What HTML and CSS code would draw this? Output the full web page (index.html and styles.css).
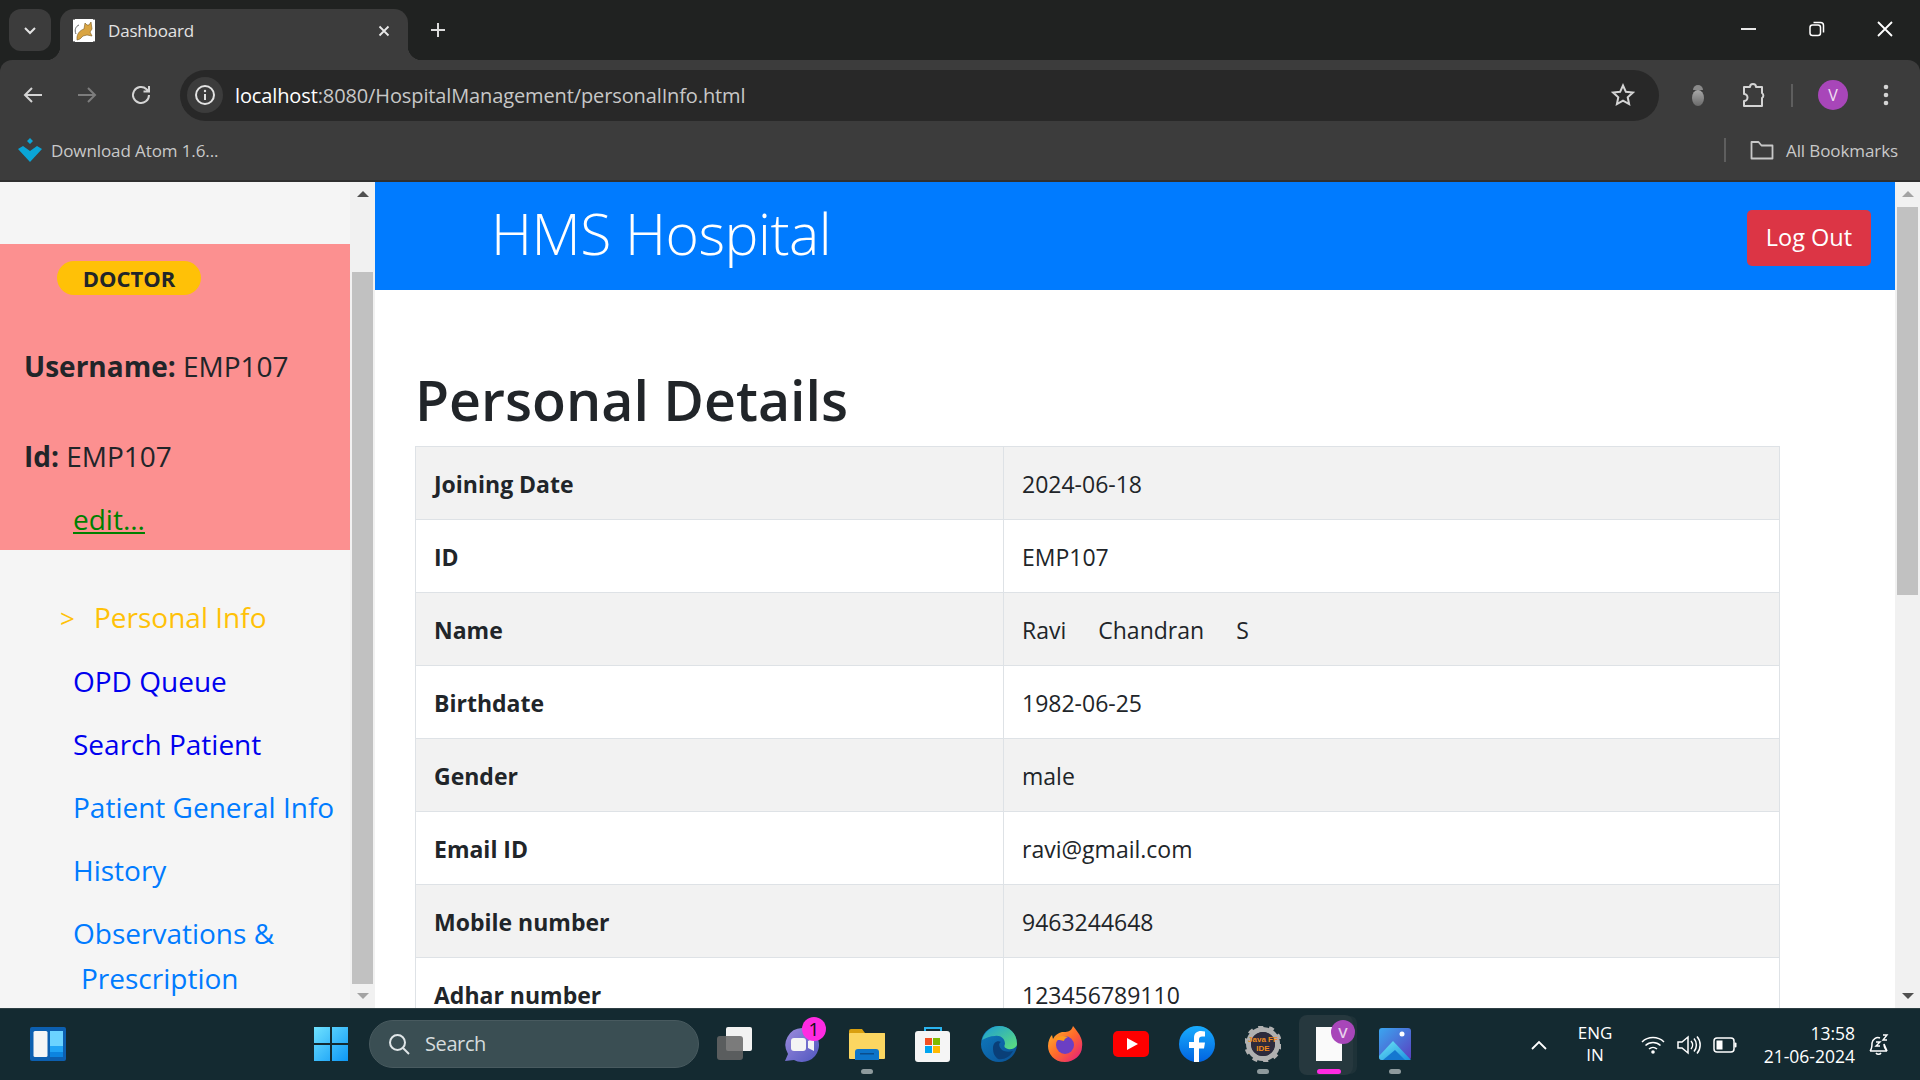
FILE: index.html
```html
<!DOCTYPE html>
<html lang="en">
    <head>
        <meta charset="UTF-8">
        <title>Dashboard</title>
        <link rel="stylesheet" href="styles.css">
    </head>
    <body>
        <!-- browser chrome -->
        <header class="tabstrip">
            <div class="tab-search">
                <svg width="16" height="16" viewBox="0 0 16 16"><path d="M3 6l5 5 5-5" fill="none" stroke="#e3e3e3" stroke-width="2"/></svg>
            </div>
            <div class="tab">
                <svg class="favicon" width="22" height="23" viewBox="0 0 22 23">
                    <rect width="22" height="23" fill="#fff"/>
                    <path d="M0 0h2M20 0h2M0 23h2M20 23h2" stroke="#111" stroke-width="1"/>
                    <path d="M4 18c1-5 4-7 7-8l1-6 2 2h2l2-3 1 7-2 3 2 4-5-1-4 1-3 3-3 1z" fill="#d9a441" stroke="#7a5a20" stroke-width=".6"/>
                    <path d="M3 15C1 11 3 7 6 6" fill="none" stroke="#666" stroke-width="1"/>
                </svg>
                <span class="tab-title">Dashboard</span>
                <svg class="tab-close" width="14" height="14" viewBox="0 0 14 14"><path d="M2.500 2.500l9 9M11.500 2.500l-9 9" stroke="#e8e8e8" stroke-width="1.800"/></svg>
            </div>
            <svg class="new-tab" width="18" height="18" viewBox="0 0 18 18"><path d="M9 2v14M2 9h14" stroke="#dcdcdc" stroke-width="2"/></svg>
            <div class="window-buttons">
                <svg width="16" height="16" viewBox="0 0 16 16"><path d="M0 8h15" stroke="#fff" stroke-width="1.800"/></svg>
                <svg width="16" height="16" viewBox="0 0 16 16"><rect x="1" y="4" width="10.500" height="10.500" rx="2.500" fill="none" stroke="#fff" stroke-width="1.500"/><path d="M4.500 1.500h7a3 3 0 0 1 3 3v7" fill="none" stroke="#fff" stroke-width="1.500"/></svg>
                <svg width="16" height="16" viewBox="0 0 16 16"><path d="M1 1l14 14M15 1L1 15" stroke="#fff" stroke-width="1.800"/></svg>
            </div>
        </header>

        <section class="toolbar">
            <svg class="nav-icon" width="24" height="24" viewBox="0 0 24 24"><path d="M21 12H4M11 5l-7 7 7 7" fill="none" stroke="#d4d4d4" stroke-width="2"/></svg>
            <svg class="nav-icon" width="24" height="24" viewBox="0 0 24 24"><path d="M3 12h17M13 5l7 7-7 7" fill="none" stroke="#7d7d7d" stroke-width="2"/></svg>
            <svg class="nav-icon" width="24" height="24" viewBox="0 0 24 24"><path d="M20 12a8 8 0 1 1-2.500-5.800L20 8.500M20 3v5.500h-5.500" fill="none" stroke="#d4d4d4" stroke-width="2"/></svg>
            <div class="omnibox">
                <div class="site-info">
                    <svg width="22" height="22" viewBox="0 0 22 22"><circle cx="11" cy="11" r="9" fill="none" stroke="#e3e3e3" stroke-width="2"/><path d="M11 10v6" stroke="#e3e3e3" stroke-width="2"/><circle cx="11" cy="7" r="1.200" fill="#e3e3e3"/></svg>
                </div>
                <span class="url"><b>localhost</b>:8080/HospitalManagement/personalInfo.html</span>
                <svg class="star" width="24" height="24" viewBox="0 0 24 24"><path d="M12 2.500l2.900 6.300 6.900.8-5.100 4.700 1.400 6.800-6.100-3.400-6.100 3.400 1.400-6.800L2.200 9.600l6.900-.8z" fill="none" stroke="#d4d4d4" stroke-width="2"/></svg>
            </div>
            <svg class="bug" width="22" height="24" viewBox="0 0 22 24"><defs><linearGradient id="bugfill" x1="0" y1="0" x2="0" y2="1"><stop offset="0" stop-color="#a8a8a8"/><stop offset="1" stop-color="#6a6a6a"/></linearGradient></defs><path d="M6 7a5 5 0 0 1 10 0z" fill="#8a8a8a"/><ellipse cx="11" cy="15" rx="6" ry="8" fill="url(#bugfill)"/></svg>
            <svg class="puzzle" width="26" height="26" viewBox="0 0 26 26"><path d="M3 5h6a3 3 0 0 1 6 0h6v6a3 3 0 0 1 0 5v8H3v-5a3.500 3.500 0 0 0 0-7z" fill="none" stroke="#d4d4d4" stroke-width="2" stroke-linejoin="round"/></svg>
            <i class="tool-divider"></i>
            <span class="avatar">V</span>
            <svg class="dots" width="6" height="24" viewBox="0 0 6 24"><circle cx="3" cy="4" r="2.300" fill="#d4d4d4"/><circle cx="3" cy="12" r="2.300" fill="#d4d4d4"/><circle cx="3" cy="20" r="2.300" fill="#d4d4d4"/></svg>
        </section>

        <section class="bookmarks">
            <svg width="24" height="24" viewBox="0 0 24 24"><path d="M12 0l3 3-3 3-3-3zM0 11l5-3 7 5 7-5 5 3-12 13z" fill="#0aa5d6"/></svg>
            <span class="bookmark-name">Download Atom 1.6...</span>
            <i class="bookmark-divider"></i>
            <svg width="24" height="20" viewBox="0 0 24 20"><path d="M1.500 2h7l3 3.500h11v13h-21z" fill="none" stroke="#c8c8c8" stroke-width="1.800" stroke-linejoin="round"/></svg>
            <span class="bookmark-all">All Bookmarks</span>
        </section>

        <!-- the page -->
        <div class="page">
            <aside class="sidebar">
                <div class="sidebar-body">
                    <div class="user-card">
                        <span class="role-badge">DOCTOR</span>
                        <p class="user-line first"><strong>Username:</strong> EMP107</p>
                        <p class="user-line"><strong>Id:</strong> EMP107</p>
                        <a class="edit-link">edit...</a>
                    </div>
                    <ul class="side-nav">
                        <li class="current"><span class="marker">&gt;</span>Personal Info</li>
                        <li class="visited">OPD Queue</li>
                        <li class="visited">Search Patient</li>
                        <li>Patient General Info</li>
                        <li>History</li>
                        <li>Observations &amp;<span class="wrapped">Prescription</span></li>
                    </ul>
                </div>
                <div class="scrollbar">
                    <i class="arrow-up dark"></i>
                    <div class="thumb side-thumb"></div>
                    <i class="arrow-down"></i>
                </div>
            </aside>

            <main class="content">
                <div class="hero">
                    <h2>HMS Hospital</h2>
                    <button class="logout">Log Out</button>
                </div>
                <div class="details">
                    <h1>Personal Details</h1>
                    <table class="info-table">
                        <tr><th>Joining Date</th><td>2024-06-18</td></tr>
                        <tr><th>ID</th><td>EMP107</td></tr>
                        <tr><th>Name</th><td><span class="name-part">Ravi</span><span class="name-part">Chandran</span><span>S</span></td></tr>
                        <tr><th>Birthdate</th><td>1982-06-25</td></tr>
                        <tr><th>Gender</th><td>male</td></tr>
                        <tr><th>Email ID</th><td>ravi@gmail.com</td></tr>
                        <tr><th>Mobile number</th><td>9463244648</td></tr>
                        <tr><th>Adhar number</th><td>123456789110</td></tr>
                    </table>
                </div>
            </main>

            <div class="scrollbar">
                <i class="arrow-up"></i>
                <div class="thumb main-thumb"></div>
                <i class="arrow-down dark"></i>
            </div>
        </div>

        <!-- windows taskbar -->
        <footer class="taskbar">
            <svg class="widgets" width="36" height="34" viewBox="0 0 36 34">
                <rect width="36" height="34" rx="2" fill="#0c5fb0"/>
                <rect x="3.500" y="4" width="14" height="26" rx="1.500" fill="#f5f5f5"/>
                <rect x="20" y="4" width="13" height="15" fill="#6bd3ff"/>
                <rect x="20" y="19" width="13" height="6" fill="#20a4f5"/>
                <rect x="20" y="25" width="13" height="5" fill="#0c84e0"/>
            </svg>
            <div class="slot">
                <svg width="36" height="36" viewBox="0 0 36 36">
                    <defs><linearGradient id="winblue" x1="0" y1="0" x2="1" y2="1"><stop offset="0" stop-color="#6fe2ff"/><stop offset="1" stop-color="#0d97f5"/></linearGradient></defs>
                    <path d="M1 1h16v16H1zM19 1h16v16H19zM1 19h16v16H1zM19 19h16v16H19z" fill="url(#winblue)"/>
                </svg>
            </div>
            <div class="task-search">
                <svg width="24" height="24" viewBox="0 0 24 24"><circle cx="10.500" cy="10.500" r="7.500" fill="none" stroke="#e0e6e8" stroke-width="2"/><path d="M16 16l6 6" stroke="#e0e6e8" stroke-width="2"/></svg>
                <span>Search</span>
            </div>
            <div class="slot">
                <svg width="38" height="36" viewBox="0 0 38 36"><rect x="10" y="1" width="26" height="24" rx="2" fill="#f2f2f2"/><rect x="1" y="10" width="26" height="24" rx="3" fill="#666" fill-opacity=".85"/></svg>
            </div>
            <div class="slot">
                <svg width="36" height="36" viewBox="0 0 36 36">
                    <defs><linearGradient id="chatfill" x1="0" y1="0" x2="1" y2="1"><stop offset="0" stop-color="#9d8cdc"/><stop offset="1" stop-color="#4f56c0"/></linearGradient></defs>
                    <path d="M19 2a17 17 0 1 1-8 32l-9 1 3-7A17 17 0 0 1 19 2z" fill="url(#chatfill)"/>
                    <rect x="8" y="12" width="15" height="13" rx="3" fill="#f4f4f4"/>
                    <path d="M25 15l6-3v13l-6-3z" fill="#f4f4f4"/>
                </svg>
                <span class="count-badge">1</span>
            </div>
            <div class="slot running">
                <svg width="36" height="32" viewBox="0 0 36 32">
                    <path d="M0 3a2 2 0 0 1 2-2h11l3 4h20v5H0z" fill="#d9a00f"/>
                    <rect y="5" width="36" height="26" rx="1" fill="#fbd661"/>
                    <path d="M6 32V24a3 3 0 0 1 3-3h18a3 3 0 0 1 3 3v8z" fill="#0d74c9"/>
                    <rect x="11" y="25" width="14" height="1.500" fill="#0a4d8c"/>
                </svg>
            </div>
            <div class="slot">
                <svg width="36" height="36" viewBox="0 0 36 36">
                    <path d="M10 6V2h16v4" fill="none" stroke="#2ab4ef" stroke-width="2"/>
                    <rect y="5" width="35" height="31" rx="3" fill="#f5f5f5"/>
                    <rect x="10" y="12" width="7" height="7" fill="#f25022"/>
                    <rect x="18" y="12" width="7" height="7" fill="#7fba00"/>
                    <rect x="10" y="20" width="7" height="7" fill="#00a4ef"/>
                    <rect x="18" y="20" width="7" height="7" fill="#ffb900"/>
                </svg>
            </div>
            <div class="slot">
                <svg width="36" height="36" viewBox="0 0 36 36">
                    <defs>
                        <linearGradient id="edgetop" x1="0" y1="0" x2="1" y2="1"><stop offset="0" stop-color="#1c9bd6"/><stop offset="1" stop-color="#5fe07a"/></linearGradient>
                        <linearGradient id="edgelow" x1="0" y1="0" x2="1" y2="1"><stop offset="0" stop-color="#0f7cc0"/><stop offset="1" stop-color="#0a4f93"/></linearGradient>
                    </defs>
                    <circle cx="18" cy="18" r="18" fill="url(#edgelow)"/>
                    <path d="M1 14C4 4 12 0 18 0c10 0 18 7 18 18 0 3-4 6-9 5-4-1-4-3-3-5 0-6-5-9-10-8-5 0-9 2-13 4z" fill="url(#edgetop)"/>
                    <path d="M12 22c0-5 4-8 8-6-3 1-2 5 1 8 3 2 7 2 11 1-3 6-9 9-15 8-4-3-5-7-5-11z" fill="#0a3f78"/>
                </svg>
            </div>
            <div class="slot">
                <svg width="36" height="38" viewBox="0 0 36 38">
                    <defs><linearGradient id="foxfill" x1="0" y1="0" x2="1" y2="1"><stop offset="0" stop-color="#ffbd2e"/><stop offset=".5" stop-color="#ff6a2b"/><stop offset="1" stop-color="#e31587"/></linearGradient></defs>
                    <path d="M18 37C7 37 1 29 1 21c0-5 2-9 4-11l1 4c2-4 5-6 9-7 3 0 9 1 11-6 3 4 6 7 8 12 2 5 1 9 1 9 0 8-8 15-17 15z" fill="url(#foxfill)"/>
                    <circle cx="18" cy="20" r="9" fill="#6b3fc4"/>
                    <path d="M8 14c3-3 8-4 13-2-3 1-4 3-4 4-3-1-6 0-9-2z" fill="#ff9a1f"/>
                </svg>
            </div>
            <div class="slot">
                <svg width="36" height="26" viewBox="0 0 36 26"><rect width="36" height="26" rx="5" fill="#f00"/><path d="M14 7l11 6-11 6z" fill="#fff"/></svg>
            </div>
            <div class="slot">
                <svg width="36" height="36" viewBox="0 0 36 36">
                    <defs><linearGradient id="fbfill" x1="0" y1="0" x2="0" y2="1"><stop offset="0" stop-color="#18acfe"/><stop offset="1" stop-color="#0163e0"/></linearGradient></defs>
                    <circle cx="18" cy="18" r="18" fill="url(#fbfill)"/>
                    <path d="M15 36V22h-5v-6h5v-4c0-5 3-7 7-7l4 .4v5h-3c-2 0-3 1-3 3v3h6l-1 6h-5v14z" fill="#fff"/>
                </svg>
            </div>
            <div class="slot running">
                <svg width="36" height="36" viewBox="0 0 36 36">
                    <circle cx="18" cy="18" r="14.500" fill="none" stroke="#b0b0b0" stroke-width="5"/>
                    <circle cx="18" cy="18" r="17" fill="none" stroke="#b0b0b0" stroke-width="4" stroke-dasharray="5 5.700"/>
                    <circle cx="18" cy="18" r="12" fill="#2d2a3c"/>
                    <text class="gear-text" x="18" y="16" text-anchor="middle">Java FF</text>
                    <text class="gear-text" x="18" y="25" text-anchor="middle">IDE</text>
                </svg>
            </div>
            <div class="slot active running-pink">
                <svg width="26" height="34" viewBox="0 0 26 34"><rect width="26" height="34" fill="#fafafa"/></svg>
                <span class="app-badge">V</span>
            </div>
            <div class="slot running">
                <svg width="32" height="32" viewBox="0 0 32 32">
                    <defs>
                        <linearGradient id="photosky" x1="0" y1="0" x2="1" y2="1"><stop offset="0" stop-color="#3aa6f0"/><stop offset="1" stop-color="#5a3fc0"/></linearGradient>
                        <linearGradient id="photohill" x1="0" y1="0" x2="1" y2="1"><stop offset="0" stop-color="#6fe6f5"/><stop offset="1" stop-color="#1a8fe0"/></linearGradient>
                    </defs>
                    <rect width="32" height="32" rx="3" fill="url(#photosky)"/>
                    <circle cx="23" cy="6" r="2.500" fill="#fff"/>
                    <path d="M0 28L14 13l18 19H3a3 3 0 0 1-3-3z" fill="url(#photohill)"/>
                    <path d="M4 32l12-10 10 10z" fill="#1577d0"/>
                </svg>
            </div>

            <div class="tray">
                <svg width="18" height="10" viewBox="0 0 18 10"><path d="M2 9l7-7 7 7" fill="none" stroke="#fff" stroke-width="1.800"/></svg>
                <div class="lang"><span>ENG</span><span>IN</span></div>
                <div class="tray-icons">
                    <svg width="24" height="20" viewBox="0 0 24 20"><g fill="none" stroke="#fff" stroke-width="1.500"><path d="M1 7a16 16 0 0 1 22 0"/><path d="M4.500 10.500a11 11 0 0 1 15 0"/><path d="M8 14a6 6 0 0 1 8 0"/></g><circle cx="12" cy="17" r="1.800" fill="#fff"/></svg>
                    <svg width="24" height="20" viewBox="0 0 24 20"><g fill="none" stroke="#fff" stroke-width="1.500"><path d="M1 7h4l6-5v16l-6-5H1z"/><path d="M14 6a6 6 0 0 1 0 8"/><path d="M17 3.500a10 10 0 0 1 0 13"/><path d="M20 1.500a13 13 0 0 1 0 17"/></g></svg>
                    <svg width="24" height="16" viewBox="0 0 24 16"><rect x="1" y="1" width="20" height="14" rx="3" fill="none" stroke="#fff" stroke-width="1.500"/><rect x="3.500" y="3.500" width="6" height="9" fill="#fff"/><rect x="21.500" y="5.500" width="2" height="5" rx="1" fill="#fff"/></svg>
                </div>
                <div class="clock"><span>13:58</span><span>21-06-2024</span></div>
                <svg class="bell" width="22" height="24" viewBox="0 0 22 24"><path d="M2 18c2-2 2-4 2-8a6 6 0 0 1 8-5M16 11c0 3 1 5 3 7zM2 18h17M8 20a3 3 0 0 0 5 0" fill="none" stroke="#fff" stroke-width="1.500"/><path d="M8 9h4l-4 4h4M15 2h4l-4 5h4" fill="none" stroke="#fff" stroke-width="1.400"/></svg>
            </div>
        </footer>
    </body>
</html>
```

FILE: styles.css
```css
* {
    padding: 0px;
    margin: 0px;
    box-sizing: border-box;
}

body {
    width: 1920px;
    height: 1080px;
    overflow: hidden;
    display: flex;
    flex-direction: column;
    font-family: "Open Sans", "Noto Sans", sans-serif;
    color: #212529;
    background-color: #202221;
}

/* browser chrome */
.tabstrip {
    height: 60px;
    display: flex;
    align-items: flex-start;
    padding-top: 9px;
    padding-left: 9px;
    background-color: #202221;
    flex-shrink: 0;
}

.tab-search {
    width: 42px;
    height: 42px;
    border-radius: 12px;
    background-color: #3c3c3c;
    display: flex;
    align-items: center;
    justify-content: center;
}

.tab {
    position: relative;
    width: 348px;
    height: 51px;
    margin-left: 9px;
    border-radius: 14px 14px 0 0;
    background-color: #3c3c3c;
    display: flex;
    align-items: center;
    padding: 0 17px 0 13px;
    padding-bottom: 8px;
}

.tab::before,
.tab::after {
    content: "";
    position: absolute;
    bottom: 0;
    width: 14px;
    height: 14px;
}

.tab::before {
    left: -14px;
    background: radial-gradient(circle at 0 0, transparent 14px, #3c3c3c 14.500px);
}

.tab::after {
    right: -14px;
    background: radial-gradient(circle at 100% 0, transparent 14px, #3c3c3c 14.500px);
}

.favicon {
    flex-shrink: 0;
}

.tab-title {
    margin-left: 13px;
    font-size: 17px;
    letter-spacing: -0.2px;
    color: #e3e3e3;
    flex: 1;
}

.new-tab {
    margin-left: 21px;
    margin-top: 12px;
}

.window-buttons {
    margin-left: auto;
    display: flex;
    gap: 52px;
    padding-top: 12px;
    padding-right: 27px;
}

.toolbar {
    height: 70px;
    flex-shrink: 0;
    display: flex;
    align-items: center;
    padding-left: 21px;
    background-color: #3c3c3c;
    border-radius: 12px 12px 0 0;
}

.nav-icon {
    margin-right: 30px;
}

.nav-icon:nth-child(3) {
    margin-right: 27px;
}

.omnibox {
    width: 1479px;
    height: 51px;
    border-radius: 26px;
    background-color: #282828;
    display: flex;
    align-items: center;
    padding-left: 7px;
    padding-right: 24px;
}

.site-info {
    width: 36px;
    height: 36px;
    border-radius: 50%;
    background-color: #3c3c3c;
    display: flex;
    align-items: center;
    justify-content: center;
}

.url {
    margin-left: 12px;
    font-size: 20px;
    letter-spacing: -0.12px;
    color: #c7c7c7;
    flex: 1;
}

.url b {
    font-weight: 400;
    color: #fff;
}

.bug {
    margin-left: 28px;
}

.puzzle {
    margin-left: 32px;
}

.tool-divider {
    width: 2px;
    height: 23px;
    margin-left: 24px;
    background-color: #5e5e5e;
}

.avatar {
    width: 30px;
    height: 30px;
    margin-left: 25px;
    border-radius: 50%;
    background-color: #a846b9;
    color: #f0e0f2;
    font-size: 16px;
    line-height: 30px;
    text-align: center;
}

.dots {
    margin-left: 35px;
}

.bookmarks {
    height: 52px;
    flex-shrink: 0;
    display: flex;
    align-items: center;
    padding-left: 18px;
    padding-bottom: 10px;
    background-color: #3c3c3c;
    border-bottom: 2px solid #2f2f2f;
    font-size: 17px;
    color: #c9c9c9;
}

.bookmark-name {
    margin-left: 9px;
    letter-spacing: -0.1px;
}

.bookmark-divider {
    width: 2px;
    height: 24px;
    margin-left: auto;
    background-color: #5e5e5e;
}

.bookmarks svg:nth-of-type(2) {
    margin-left: 24px;
}

.bookmark-all {
    margin-left: 12px;
    margin-right: 22px;
    letter-spacing: -0.1px;
}

/* page */
.page {
    height: 826px;
    flex-shrink: 0;
    display: flex;
    overflow: hidden;
    background-color: #fff;
}

.sidebar {
    width: 375px;
    display: flex;
    flex-shrink: 0;
    background-color: #f5f5f5;
}

.sidebar-body {
    width: 350px;
    padding-top: 62px;
}

.user-card {
    height: 306px;
    padding-top: 17px;
    background-color: #fc9090;
    font-size: 28px;
}

.role-badge {
    display: block;
    width: 144px;
    height: 34px;
    margin-left: 57px;
    border-radius: 17px;
    background-color: #ffc107;
    font-size: 22px;
    font-weight: 700;
    line-height: 35px;
    text-align: center;
}

.user-line {
    height: 43px;
    margin-top: 47px;
    padding-left: 24px;
    line-height: 43px;
    white-space: nowrap;
}

.user-line.first {
    margin-top: 50px;
}

.edit-link {
    display: block;
    margin-top: 20px;
    margin-left: 73px;
    line-height: 43px;
    color: #008000;
    text-decoration: underline;
}

.side-nav {
    list-style: none;
    margin-top: 36px;
    font-size: 28px;
    color: #007bff;
}

.side-nav li {
    padding: 9px 0 9px 73px;
    line-height: 45px;
    white-space: nowrap;
}

.side-nav .current {
    padding-left: 60px;
    color: #ffc107;
}

.side-nav .visited {
    color: #0000ee;
}

.marker {
    display: inline-block;
    width: 34px;
    font-size: 26px;
}

.wrapped {
    display: block;
    margin-left: 8px;
}

.scrollbar {
    width: 25px;
    flex-shrink: 0;
    display: flex;
    flex-direction: column;
    align-items: center;
    background-color: #f1f1f1;
    padding-top: 9px;
}

.thumb {
    width: 21px;
    background-color: #c1c1c1;
}

.side-thumb {
    height: 712px;
    margin-top: 75px;
    margin-bottom: 1px;
}

.main-thumb {
    height: 388px;
    margin-top: 10px;
    margin-bottom: 390px;
}

.arrow-up {
    border-left: 6px solid transparent;
    border-right: 6px solid transparent;
    border-bottom: 6px solid #a3a3a3;
}

.arrow-down {
    margin-top: 8px;
    border-left: 6px solid transparent;
    border-right: 6px solid transparent;
    border-top: 6px solid #a3a3a3;
}

.arrow-up.dark {
    border-bottom-color: #505050;
}

.arrow-down.dark {
    border-top-color: #505050;
}

.content {
    flex: 1;
    min-width: 0;
}

.hero {
    height: 108px;
    display: flex;
    align-items: center;
    justify-content: space-between;
    padding-left: 116px;
    padding-right: 24px;
    background-color: #007bff;
    color: #fff;
}

.hero h2 {
    padding-bottom: 6px;
    font-size: 57px;
    font-weight: 300;
    letter-spacing: -0.5px;
}

.logout {
    width: 124px;
    height: 56px;
    margin-top: 4px;
    padding-bottom: 2px;
    border: none;
    border-radius: 5px;
    background-color: #dc3545;
    color: #fff;
    font-family: inherit;
    font-size: 23.500px;
}

.details {
    padding-top: 74px;
    padding-left: 40px;
}

.details h1 {
    font-size: 55.500px;
    font-weight: 600;
    line-height: 72px;
    margin-bottom: 10px;
}

.info-table {
    width: 1365px;
    border-collapse: collapse;
    font-size: 23px;
    line-height: 36px;
}

.info-table th,
.info-table td {
    height: 73px;
    padding: 19px 18px 17px;
    border: 1px solid #dee2e6;
    text-align: left;
}

.info-table th {
    width: 588px;
    font-weight: 700;
}

.info-table tr:nth-child(odd) {
    background-color: #f2f2f2;
}

.name-part {
    margin-right: 32px;
}

/* taskbar */
.taskbar {
    height: 72px;
    flex-shrink: 0;
    display: flex;
    align-items: center;
    background-color: #142a31;
    border-top: 1px solid #2e3f44;
    color: #fff;
    padding-left: 30px;
}

.widgets {
    margin-right: 232px;
    margin-bottom: 2px;
    flex-shrink: 0;
}

.slot {
    position: relative;
    width: 66px;
    height: 62px;
    padding-bottom: 2px;
    flex-shrink: 0;
    display: flex;
    align-items: center;
    justify-content: center;
}

.task-search {
    width: 330px;
    height: 48px;
    margin-left: 5px;
    margin-right: 3px;
    margin-bottom: 2px;
    flex-shrink: 0;
    border-radius: 24px;
    border: 1px solid #485a5f;
    background-color: #3a4e53;
    display: flex;
    align-items: center;
    padding-left: 17px;
    font-size: 20px;
    color: #d6dcdd;
}

.task-search span {
    margin-left: 14px;
    letter-spacing: -0.4px;
}

.count-badge {
    position: absolute;
    top: 3px;
    right: 8px;
    width: 24px;
    height: 24px;
    border-radius: 50%;
    background-color: #ff2be2;
    color: #111;
    font-size: 19px;
    line-height: 24px;
    text-align: center;
}

.running::after,
.running-pink::after {
    content: "";
    position: absolute;
    bottom: 2px;
    left: 50%;
    width: 12px;
    height: 5px;
    margin-left: -6px;
    border-radius: 3px;
    background-color: #8e9a9d;
}

.active {
    width: 54px;
    height: 60px;
    margin-left: 3px;
    margin-right: 9px;
    padding-left: 6px;
    border-radius: 8px;
    background-color: #26383e;
    box-shadow: 5px 0 0 -1px #1e3238;
}

.running-pink::after {
    width: 24px;
    margin-left: -9px;
    bottom: 1px;
    background-color: #ff2be2;
}

.app-badge {
    position: absolute;
    top: 5px;
    right: -2px;
    width: 24px;
    height: 24px;
    border-radius: 50%;
    background-color: #a846b9;
    color: #e8d0ec;
    font-size: 15px;
    font-weight: 600;
    line-height: 24px;
    text-align: center;
}

.gear-text {
    font-size: 8px;
    font-weight: 700;
    font-family: "Liberation Sans", sans-serif;
    fill: #f08a1d;
}

.tray {
    margin-left: auto;
    display: flex;
    align-items: center;
    padding-right: 30px;
    font-size: 17px;
}

.lang {
    display: flex;
    flex-direction: column;
    align-items: center;
    width: 50px;
    margin-left: 22px;
    line-height: 22px;
    margin-bottom: 2px;
}

.tray-icons {
    display: flex;
    gap: 12px;
    align-items: center;
    margin-left: 21px;
}

.clock {
    display: flex;
    flex-direction: column;
    align-items: flex-end;
    width: 104px;
    margin-left: 14px;
    line-height: 23px;
    font-size: 17.500px;
}

.bell {
    margin-left: 13px;
}
```
